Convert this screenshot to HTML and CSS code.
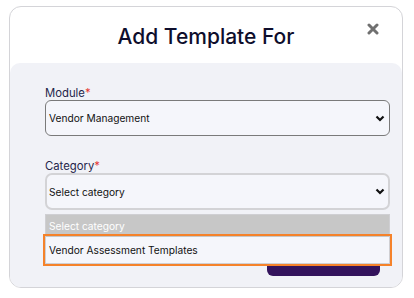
FILE: index.html
```html
<!DOCTYPE html>
<html lang="en">
<head>
    <meta charset="UTF-8">
    <meta name="viewport" content="width=device-width, initial-scale=1.0">
    <title>Add Template For</title>
    <link rel="stylesheet" href="styles.css">
</head>
<body>
    <div class="modal">
        <div class="modal-header">
            <h2 class="modal-title">Add Template For</h2>
            <button class="close-btn" aria-label="Close">
                <svg width="12" height="12" viewBox="0 0 12 12">
                    <path d="M2 2 L10 10 M10 2 L2 10" stroke="#707070" stroke-width="3" stroke-linecap="round"/>
                </svg>
            </button>
        </div>
        <div class="modal-body">
            <label class="field-label">Module<span class="req">*</span></label>
            <div class="select">
                <span>Vendor Management</span>
                <svg class="chevron" width="10" height="7" viewBox="0 0 10 7">
                    <path d="M1.5 1.5 L5 5 L8.5 1.5" fill="none" stroke="#111" stroke-width="2.2"/>
                </svg>
            </div>

            <label class="field-label second">Category<span class="req">*</span></label>
            <div class="select-wrap">
                <div class="select focused">
                    <span>Select category</span>
                    <svg class="chevron" width="10" height="7" viewBox="0 0 10 7">
                        <path d="M1.5 1.5 L5 5 L8.5 1.5" fill="none" stroke="#111" stroke-width="2.2"/>
                    </svg>
                </div>
                <ul class="dropdown">
                    <li class="placeholder">Select category</li>
                    <li class="option active">Vendor Assessment Templates</li>
                </ul>
            </div>

            <div class="actions">
                <button class="submit-btn">Add</button>
            </div>
        </div>
    </div>
</body>
</html>
```

FILE: styles.css
```css
body {
    margin: 0;
    background: #fff;
    font-family: Inter, "Noto Sans", sans-serif;
}
.modal {
    width: 392px;
    margin: 6px 0 0 9px;
    border: 1px solid #d4d4d8;
    border-radius: 12px;
    overflow: hidden;
    background: #fff;
}
.modal-header {
    position: relative;
    height: 56px;
    display: flex;
    align-items: center;
    justify-content: center;
}
.modal-title {
    margin: 0;
    font-size: 21px;
    font-weight: 500;
    color: #0e0e2c;
    padding-top: 2px;
}
.close-btn {
    position: absolute;
    top: 16px;
    right: 23px;
    border: 0;
    background: none;
    padding: 0;
    width: 12px;
    height: 12px;
    display: flex;
}
.modal-body {
    background: #f1f2f7;
    padding: 23px 12px 11px 35px;
    border-radius: 10px 10px 0 0;
}
.field-label {
    display: block;
    font-size: 11.3px;
    color: #25254a;
    line-height: 14px;
}
.field-label.second {
    margin-top: 23px;
}
.req {
    color: #e53935;
}
.select {
    height: 34px;
    border: 1px solid #7a7a7a;
    border-radius: 6px;
    background: #f5f6fb;
    display: flex;
    align-items: center;
    justify-content: space-between;
    padding: 0 4px 0 3px;
    font-size: 10.2px;
    color: #111;
}
.select.focused {
    height: 33px;
    border: 2px solid #d3d3d6;
    border-radius: 7px;
    padding: 0 3px 0 2px;
}
.select-wrap {
    position: relative;
}
.dropdown {
    position: absolute;
    top: 41px;
    left: 0;
    right: 0;
    margin: 0;
    padding: 0;
    list-style: none;
    border: 1px solid #cfcfd3;
    background: #f5f6fb;
    font-size: 10.2px;
    z-index: 2;
}
.dropdown li {
    padding-left: 3px;
}
.placeholder {
    background: #c7c7c7;
    color: #fff;
    height: 22px;
    line-height: 22px;
}
.option {
    height: 26px;
    line-height: 26px;
    color: #111;
}
.option.active {
    outline: 2px solid #f5822a;
    outline-offset: 1px;
}
.actions {
    display: flex;
    justify-content: flex-end;
    padding-right: 10px;
    margin-top: 30px;
}
.submit-btn {
    width: 113px;
    height: 36px;
    border: 0;
    border-radius: 6px;
    background: #33135c;
    color: #fff;
    font-family: inherit;
    font-size: 12px;
}
```
